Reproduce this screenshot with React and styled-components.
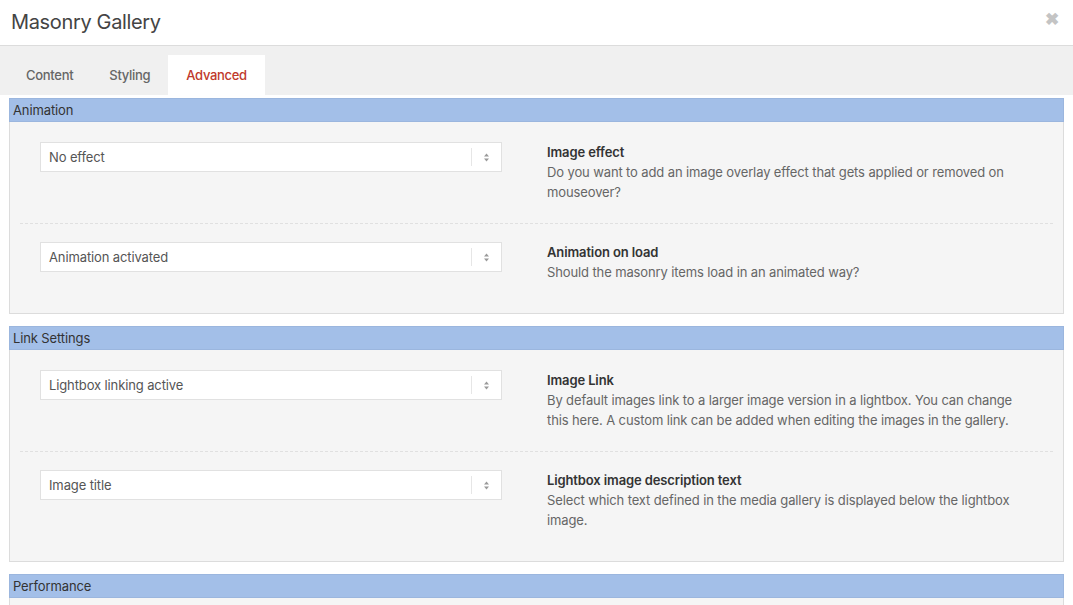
import React from "react";
import styled, { createGlobalStyle } from "styled-components";

const Global = createGlobalStyle`
  html, body { margin: 0; padding: 0; background: #fff; }
  body { font-family: Inter, "Liberation Sans", Arial, sans-serif; font-size: 13px; color: #444; overflow: hidden; letter-spacing: -0.12px; }
  * { box-sizing: border-box; }
`;

const Modal = styled.div`
  width: 1073px;
  height: 605px;
  display: flex;
  flex-direction: column;
  background: #fff;
  overflow: hidden;
  & > * { flex-shrink: 0; }
`;

const Header = styled.div`
  height: 46px;
  display: flex;
  align-items: center;
  justify-content: space-between;
  padding: 0 14px 2px 11px;
  border-bottom: 1px solid #dcdcdc;
`;

const Title = styled.h1`
  margin: 0;
  font-size: 20px;
  font-weight: 400;
  color: #444;
  letter-spacing: -0.35px;
`;

const Close = styled.span`
  color: #c4c4c4;
  font-size: 17px;
  font-weight: 700;
  line-height: 1;
  margin-top: -4px;
`;

const TabBar = styled.div`
  height: 49px;
  background: #f0f0f0;
  display: flex;
  align-items: flex-end;
  padding-left: 8px;
`;

const Tab = styled.div`
  height: 40px;
  display: flex;
  align-items: center;
  padding: 0 18px;
  font-size: 13px;
  font-weight: 500;
  letter-spacing: -0.3px;
  color: ${(p) => (p.$active ? "#c0392b" : "#666")};
  background: ${(p) => (p.$active ? "#fff" : "transparent")};
`;

const Body = styled.div`
  padding: 3px 9px 0 9px;
  display: flex;
  flex-direction: column;
  gap: 12px;
`;

const Section = styled.section`
  border: 1px solid #dcdcdc;
  background: #f5f5f5;
  padding-bottom: 10px;
`;

const SectionHead = styled.div`
  height: 24px;
  margin: -1px -1px 0 -1px;
  background: #a3bfe8;
  border: 1px solid #9bb6de;
  display: flex;
  align-items: center;
  padding-left: 3px;
  font-size: 13px;
  color: #333;
`;

const Row = styled.div`
  display: grid;
  grid-template-columns: 462px 1fr;
  column-gap: 45px;
  margin: 0 10px;
  padding: ${(p) => (p.$first ? "20px" : "18px")} 20px 21px 20px;
  border-top: ${(p) => (p.$first ? "none" : "1px dashed #e0e0e0")};
  align-items: start;
`;

const Select = styled.div`
  height: 30px;
  background: #fff;
  border: 1px solid #e1e1e1;
  display: flex;
  align-items: center;
  font-size: 13px;
  color: #555;
  padding-left: 8px;
`;

const SelectText = styled.span`
  flex: 1;
`;

const SelectArrow = styled.span`
  width: 30px;
  height: 18px;
  border-left: 1px solid #e6e6e6;
  display: flex;
  align-items: center;
  justify-content: center;
`;

const Desc = styled.div`
  line-height: 20px;
  font-size: 13px;
  color: #666;
`;

const DescTitle = styled.div`
  font-weight: 600;
  color: #333;
`;

const Arrows = () => (
  <svg width="7" height="9" viewBox="0 0 7 9">
    <path d="M3.5 0.5 L6 3.5 H1 Z" fill="#9a9a9a" />
    <path d="M3.5 8.5 L6 5.5 H1 Z" fill="#9a9a9a" />
  </svg>
);

const sections = [
  {
    name: "Animation",
    rows: [
      {
        value: "No effect",
        title: "Image effect",
        text: "Do you want to add an image overlay effect that gets applied or removed on mouseover?",
      },
      {
        value: "Animation activated",
        title: "Animation on load",
        text: "Should the masonry items load in an animated way?",
      },
    ],
  },
  {
    name: "Link Settings",
    rows: [
      {
        value: "Lightbox linking active",
        title: "Image Link",
        text: "By default images link to a larger image version in a lightbox. You can change this here. A custom link can be added when editing the images in the gallery.",
      },
      {
        value: "Image title",
        title: "Lightbox image description text",
        text: "Select which text defined in the media gallery is displayed below the lightbox image.",
      },
    ],
  },
  { name: "Performance", rows: [] },
];

export default function App() {
  return (
    <Modal>
      <Global />
      <Header>
        <Title>Masonry Gallery</Title>
        <Close>✖</Close>
      </Header>
      <TabBar>
        <Tab>Content</Tab>
        <Tab>Styling</Tab>
        <Tab $active>Advanced</Tab>
      </TabBar>
      <Body>
        {sections.map((s) => (
          <Section key={s.name}>
            <SectionHead>{s.name}</SectionHead>
            {s.rows.map((r, i) => (
              <Row key={r.title} $first={i === 0}>
                <Select>
                  <SelectText>{r.value}</SelectText>
                  <SelectArrow>
                    <Arrows />
                  </SelectArrow>
                </Select>
                <Desc>
                  <DescTitle>{r.title}</DescTitle>
                  {r.text}
                </Desc>
              </Row>
            ))}
          </Section>
        ))}
      </Body>
    </Modal>
  );
}
